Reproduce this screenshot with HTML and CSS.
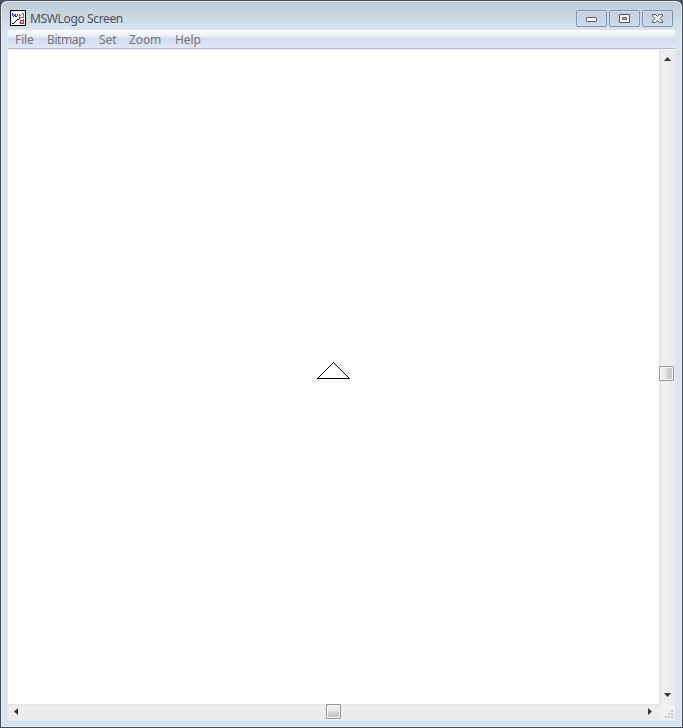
FILE: index.html
```html
<!DOCTYPE html>
<html lang="en">
<head>
<meta charset="utf-8">
<title>MSWLogo Screen</title>
<link rel="stylesheet" href="styles.css">
</head>
<body>
<div class="window">
  <header class="titlebar">
    <svg class="app-icon" width="16" height="16" shape-rendering="crispEdges">
      <path fill="#000" d="M0 0h16v16H0z"/>
      <path fill="#fff" d="M1 1h14v14H1z"/>
      <path fill="#2525f0" d="M2 3h1v3H2zM3 4h1v1H3zM3 6h1v1H3zM4 5h1v1H4zM5 4h1v3H5zM6 6h1v1H6zM7 4h1v2H7z"/>
      <path fill="#777" d="M9 4h1v4H9zM10 5h1v1h-1zM10 7h3v1h-3zM11 4h1v1h-1zM12 3h1v1h-1zM13 3h1v5h-1z"/>
      <path fill="#000" d="M2 13h2v1H2zM4 12h1v1H4zM5 11h1v1H5zM6 10h1v1H6zM7 9h2v1H7zM9 8h1v1H9z"/>
      <path fill="#ed1c24" d="M10 10h4v4h-4zM13 9h1v1h-1z"/>
      <path fill="#fff" d="M11 11h2v2h-2z"/>
    </svg>
    <h1 class="title">MSWLogo Screen</h1>
    <div class="controls">
      <button class="control" aria-label="Minimize"><svg width="13" height="9"><rect x="1.500" y="3.500" width="10" height="4" rx=".7" fill="#f7f7f7" stroke="#555969"/></svg></button>
      <button class="control" aria-label="Maximize"><svg width="13" height="9"><path d="M1.500.500h10v8h-10z" fill="#f7f7f7" stroke="#555969"/><path d="M4.500 3.500h4v2h-4z" fill="#b9c8dd" stroke="#555969"/></svg></button>
      <button class="control" aria-label="Close"><svg width="13" height="9"><path d="M1.500.500h3l2 2 2-2h3v1.500L9 4.500 11.500 7v1.500h-3l-2-2-2 2h-3V7L4 4.500 1.500 2z" fill="#f7f7f7" stroke="#555969"/></svg></button>
    </div>
  </header>
  <nav class="menu"><span class="file">File</span><span class="bitmap">Bitmap</span><span class="set">Set</span><span class="zoom">Zoom</span><span class="help">Help</span></nav>
  <main class="workspace">
    <section class="canvas">
      <svg width="33" height="17" shape-rendering="crispEdges"><path d="M.5 16.500h32L16.500.500z" fill="none" stroke="#000"/></svg>
    </section>
    <div class="scroll vertical">
      <svg class="arrow" width="7" height="4"><path d="M0 4L3.500 0 7 4z" fill="#353535"/></svg>
      <div class="thumb"></div>
      <svg class="arrow" width="7" height="4"><path d="M0 0h7L3.500 4z" fill="#353535"/></svg>
    </div>
    <div class="scroll horizontal">
      <svg class="arrow" width="4" height="7"><path d="M4 0v7L0 3.500z" fill="#353535"/></svg>
      <div class="thumb"></div>
      <svg class="arrow" width="4" height="7"><path d="M0 0v7l4-3.500z" fill="#353535"/></svg>
    </div>
    <div class="grip"><svg width="9" height="9" shape-rendering="crispEdges"><path d="M6 0h2v2H6zM3 3h2v2H3zM6 3h2v2H6zM0 6h2v2H0zM3 6h2v2H3zM6 6h2v2H6z" fill="#c5c5c5"/></svg></div>
  </main>
</div>
</body>
</html>
```
FILE: styles.css
```css
* { box-sizing: border-box; }
body {
  margin: 0;
  background: #47545d;
  overflow: hidden;
  font: 12px/18px "Noto Sans", sans-serif;
}
svg { display: block; flex: none; }
.window {
  width: 683px;
  height: 728px;
  padding: 0 7px 7px 7px;
  border: 1px solid #4b4b50;
  border-radius: 7px 7px 0 0;
  background: linear-gradient(#bdcbd9, #d7e4f1 30px, #d7e4f1);
  box-shadow: inset 0 0 0 1px #e3edf5;
}
.titlebar { display: flex; height: 29px; padding: 9px 2px 0 2px; }
.title {
  margin: 0 0 0 4px;
  font-size: 12px;
  line-height: 18px;
  font-weight: 400;
  color: #4b525a;
  letter-spacing: -.36px;
}
.controls { display: flex; gap: 2px; margin-left: auto; }
.control {
  display: flex;
  align-items: center;
  justify-content: center;
  width: 31px;
  height: 17px;
  padding: 0;
  border: 1px solid #8491ac;
  border-radius: 2px;
  background: linear-gradient(#c3d0df, #cbd8e7);
  box-shadow: inset 0 0 0 1px #d2deea;
}
.menu {
  display: flex;
  height: 20px;
  padding: 1px 0 0 7px;
  border-bottom: 1px solid #f1f3f9;
  background: linear-gradient(#fff 0, #e7eaf5 7px, #d4daed 8px, #e1e6f6 18px, #b3bbd3 18px);
  color: #75757a;
  letter-spacing: -.1px;
}
.menu span { white-space: nowrap; }
.file { width: 32px; }
.bitmap { width: 52px; letter-spacing: -.4px; }
.set { width: 30px; }
.zoom { width: 46px; }
.workspace {
  display: grid;
  grid-template-columns: 651px 16px;
  grid-template-rows: 654px 16px;
  background: #fff;
}
.canvas { display: grid; justify-content: start; align-content: start; padding: 312px 0 0 309px; }
.scroll { display: flex; align-items: center; justify-content: space-between; }
.vertical {
  flex-direction: column;
  padding: 7px 0;
  background: linear-gradient(90deg, #e4e4e4, #efefef 4px, #eaeaea 15px, #f3f3f3);
}
.horizontal {
  padding: 0 7px 1px 6px;
  background: linear-gradient(#e4e4e4, #efefef 4px, #eaeaea 15px, #f3f3f3);
}
.thumb {
  width: 15px;
  height: 15px;
  border: 1px solid #979797;
  border-radius: 1px;
  box-shadow: inset 0 0 0 1px #f5f5f5;
  background: linear-gradient(#f3f3f3, #e5e5e7 6px, #d2d3d6 7px, #c3c4c8);
}
.vertical .thumb {
  margin-top: -7px;
  margin-right: 1px;
  background: linear-gradient(90deg, #f3f3f3, #e5e5e7 6px, #d2d3d6 7px, #c3c4c8);
}
.grip { display: flex; justify-content: flex-end; align-items: flex-end; padding: 0 1px 1px 0; background: #f0f0f0; }
```
